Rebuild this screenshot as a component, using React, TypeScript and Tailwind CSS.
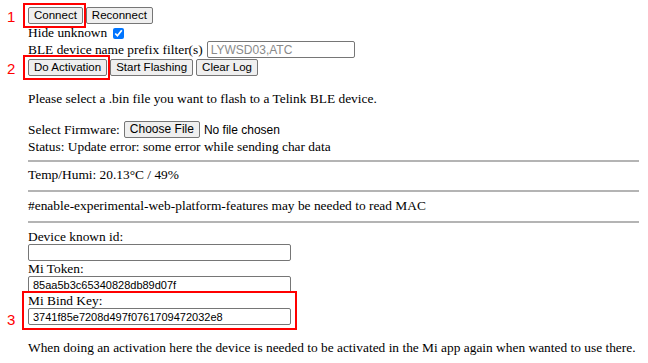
import React from "react";

const Btn = ({ children }: { children: React.ReactNode }) => (
  <button className="h-[17px] px-[5px] bg-[#efefef] border border-[#767676] rounded-[2px] text-[11.5px] leading-[15px] text-black font-['Liberation_Sans',Arial,sans-serif]">
    {children}
  </button>
);

const TextBox = ({ value }: { value?: string }) => (
  <input
    readOnly
    value={value ?? ""}
    className="block w-[263px] h-[17px] px-[4px] border border-[#767676] rounded-[2px] bg-white text-[11px] font-['Liberation_Sans',Arial,sans-serif] text-black outline-none"
  />
);

const Mark = ({ n, top }: { n: string; top: number }) => (
  <span
    className="absolute left-[7px] text-[15px] leading-[15px] text-[#ff0000] font-['Liberation_Sans',Arial,sans-serif]"
    style={{ top }}
  >
    {n}
  </span>
);

export default function App() {
  return (
    <div className="relative w-[648px] h-[363px] bg-white overflow-hidden text-black font-['Liberation_Serif','Times_New_Roman',serif] text-[13.4px] leading-[16px]">
      <div className="pl-[28px] pr-[9px] pt-[7px]">
        {/* top controls */}
        <div className="flex gap-[3px]">
          <Btn>Connect</Btn>
          <Btn>Reconnect</Btn>
        </div>
        <div className="flex items-center h-[17px] pt-[1px]">
          <span>Hide unknown</span>
          <input type="checkbox" defaultChecked className="ml-[6px] w-[11px] h-[11px]" />
        </div>
        <div className="flex items-center h-[17px]">
          <span>BLE device name prefix filter(s)</span>
          <input
            readOnly
            value="LYWSD03,ATC"
            className="ml-[4px] w-[148px] h-[17px] px-[3px] border border-[#767676] rounded-[2px] text-[12px] text-[#8a8a8a] font-['Liberation_Sans',Arial,sans-serif] outline-none"
          />
        </div>
        <div className="flex gap-[3px] mt-[1px]">
          <Btn>Do Activation</Btn>
          <Btn>Start Flashing</Btn>
          <Btn>Clear Log</Btn>
        </div>

        <p className="mt-[15px]">Please select a .bin file you want to flash to a Telink BLE device.</p>

        <div className="flex items-center h-[17px] mt-[14px]">
          <span>Select Firmware:</span>
          <span className="ml-[4px] h-[17px] px-[5px] bg-[#efefef] border border-[#767676] rounded-[2px] text-[12px] leading-[15px] font-['Liberation_Sans',Arial,sans-serif]">
            Choose File
          </span>
          <span className="ml-[4px] text-[12px] font-['Liberation_Sans',Arial,sans-serif]">No file chosen</span>
        </div>
        <div className="mt-[1px]">Status: Update error: some error while sending char data</div>

        <hr className="mt-[5px] border-t-2 border-[#b4b4b4]" />
        <div className="h-[28px] pt-[5px]">Temp/Humi: 20.13°C / 49%</div>
        <hr className="border-t-2 border-[#b4b4b4]" />
        <div className="h-[29px] pt-[6px]">
          #enable-experimental-web-platform-features may be needed to read MAC
        </div>
        <hr className="border-t-2 border-[#b4b4b4]" />

        {/* device fields */}
        <div className="mt-[6px] leading-[15px]">Device known id:</div>
        <TextBox />
        <div className="leading-[15px]">Mi Token:</div>
        <TextBox value="85aa5b3c65340828db89d07f" />
        <div className="leading-[15px]">Mi Bind Key:</div>
        <TextBox value="3741f85e7208d497f0761709472032e8" />

        <p className="mt-[15px]">
          When doing an activation here the device is needed to be activated in the Mi app again when wanted to use there.
        </p>
      </div>

      {/* annotations */}
      <div className="absolute left-[23px] top-[3px] w-[63px] h-[25px] border-2 border-[#ff0000]" />
      <div className="absolute left-[23px] top-[55px] w-[87px] h-[25px] border-2 border-[#ff0000]" />
      <div className="absolute left-[22px] top-[291px] w-[275px] h-[39px] border-2 border-[#ff0000]" />
      <Mark n="1" top={9} />
      <Mark n="2" top={61} />
      <Mark n="3" top={312} />
    </div>
  );
}
